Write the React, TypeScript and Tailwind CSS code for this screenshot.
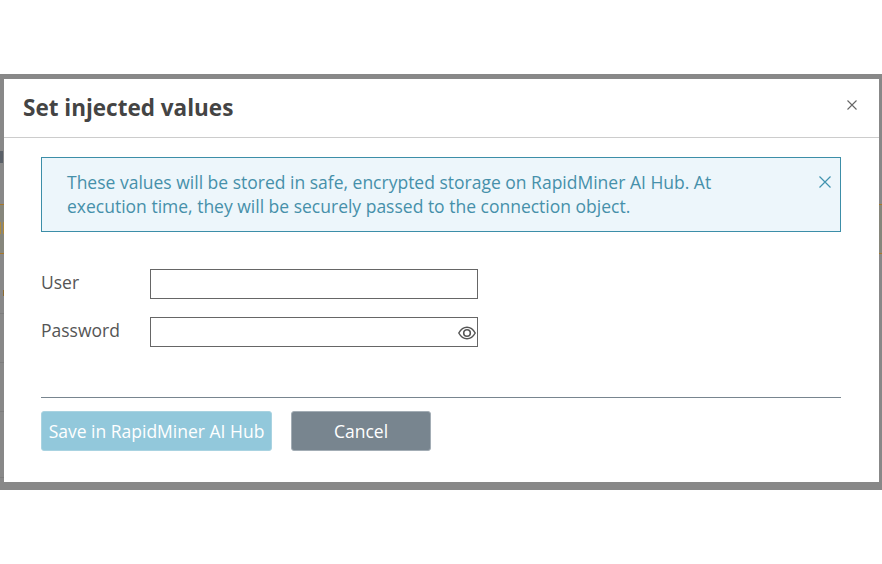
import React from "react";

export default function App() {
  return (
    <div className="h-[564px] w-[882px] overflow-hidden bg-white pt-[74px] font-['Open_Sans','Noto_Sans',sans-serif]">
      <div className="relative flex h-[416px] w-[882px] flex-col bg-[#888888] pb-[8px] pl-[4px] pr-[3px] pt-[5px]">
        {/* page content showing through the backdrop at the window edges */}
        <div className="absolute left-0 top-[77px] h-[12px] w-[3px] bg-[#5a6068]" />
        <div className="absolute left-0 top-[130px] h-[50px] w-[4px] border-y border-[#a8782a] bg-[#86867c]" />
        <div className="absolute left-0 top-[148px] h-[12px] w-[1px] bg-[#b08a3c]" />
        <div className="absolute left-[3px] top-[148px] h-[12px] w-[1px] bg-[#b08a3c]" />
        <div className="absolute left-[3px] top-[216px] h-[6px] w-[1px] bg-[#8a6a30]" />
        <div className="absolute left-0 top-[239px] h-[1px] w-[4px] bg-[#7d7d7d]" />
        <div className="absolute left-0 top-[288px] h-[1px] w-[4px] bg-[#7d7d7d]" />
        <div className="absolute left-0 top-[337px] h-[1px] w-[4px] bg-[#7d7d7d]" />
        <div className="absolute left-0 top-[403px] h-[1px] w-[4px] bg-[#7d7d7d]" />
        <div className="absolute right-0 top-[130px] h-[50px] w-[3px] border-y border-[#a8782a] bg-[#86867c]" />

        <div className="relative flex flex-1 flex-col bg-white">
          <header className="flex h-[59px] items-center justify-between border-b border-[#cccccc] pl-[19px] pr-[22px]">
            <h1 className="text-[22.5px] font-bold leading-[30px] text-[#444444]">Set injected values</h1>
            <svg width="10" height="10" viewBox="0 0 10 10" className="mb-[7px] text-[#666666]">
              <path d="M0.5 0.5 L9.5 9.5 M9.5 0.5 L0.5 9.5" stroke="currentColor" strokeWidth="1.1" fill="none" />
            </svg>
          </header>
          <div className="flex flex-1 flex-col pl-[37px] pr-[38px] pt-[19px]">
            <div className="flex h-[75px] justify-between border border-[#3c8ea8] bg-[#edf6fb] pl-[25px] pr-[8px] pt-[12px]">
              <p className="w-[690px] text-[17.5px] leading-[24px] text-[#4690aa]">
                These values will be stored in safe, encrypted storage on RapidMiner AI Hub. At execution time, they will be securely passed to the connection object.
              </p>
              <svg width="12" height="12" viewBox="0 0 12 12" className="mr-[1px] mt-[6px] text-[#4193af]">
                <path d="M0.5 0.5 L11.5 11.5 M11.5 0.5 L0.5 11.5" stroke="currentColor" strokeWidth="1.2" fill="none" />
              </svg>
            </div>
            <div className="mt-[37px] flex h-[30px] items-center">
              <label className="w-[109px] pb-[4px] text-[17.5px] leading-[24px] text-[#555555]">User</label>
              <div className="h-[30px] w-[328px] border border-[#666666] bg-white" />
            </div>
            <div className="mt-[18px] flex h-[30px] items-center">
              <label className="w-[109px] pb-[4px] text-[17.5px] leading-[24px] text-[#555555]">Password</label>
              <div className="flex h-[30px] w-[328px] items-center justify-end border border-[#666666] bg-white pt-[1px]">
                <svg width="18" height="14" viewBox="0 0 18 14" className="mr-[1px] text-[#555555]" fill="none" stroke="currentColor">
                  <path d="M0.8 7 C3 3 6 1.2 9 1.2 C12 1.2 15 3 17.2 7 C15 11 12 12.8 9 12.8 C6 12.8 3 11 0.8 7 Z" strokeWidth="1.5" />
                  <circle cx="9" cy="7" r="3.3" strokeWidth="1.6" />
                </svg>
              </div>
            </div>
            <div className="mt-[50px] border-t border-[#78858f]" />
            <div className="mt-[13px] flex gap-[19px]">
              <button className="h-[40px] w-[231px] whitespace-nowrap rounded-[3px] border border-[#a9d3e1] bg-[#92c8db] text-[17.5px] text-white">
                Save in RapidMiner AI Hub
              </button>
              <button className="h-[40px] w-[140px] rounded-[3px] border border-[#a3adb5] bg-[#78858f] text-[17.5px] text-white">
                Cancel
              </button>
            </div>
          </div>
        </div>
      </div>
    </div>
  );
}
